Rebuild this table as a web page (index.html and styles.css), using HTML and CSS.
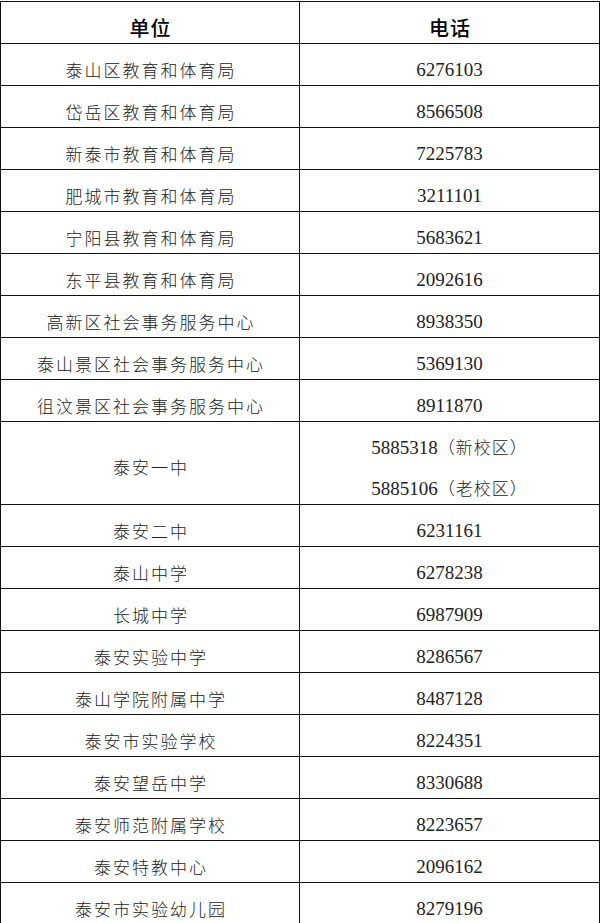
FILE: index.html
```html
<!DOCTYPE html>
<html lang="zh-CN">
<head>
<meta charset="utf-8">
<title>单位电话</title>
<link rel="stylesheet" href="styles.css">
</head>
<body>
<div class="sheet">
  <div class="cell head">单位</div>
  <div class="cell head">电话</div>

  <div class="cell name">泰山区教育和体育局</div>
  <div class="cell tel">6276103</div>
  <div class="cell name">岱岳区教育和体育局</div>
  <div class="cell tel">8566508</div>
  <div class="cell name">新泰市教育和体育局</div>
  <div class="cell tel">7225783</div>
  <div class="cell name">肥城市教育和体育局</div>
  <div class="cell tel">3211101</div>
  <div class="cell name">宁阳县教育和体育局</div>
  <div class="cell tel">5683621</div>
  <div class="cell name">东平县教育和体育局</div>
  <div class="cell tel">2092616</div>
  <div class="cell name">高新区社会事务服务中心</div>
  <div class="cell tel">8938350</div>
  <div class="cell name">泰山景区社会事务服务中心</div>
  <div class="cell tel">5369130</div>
  <div class="cell name">徂汶景区社会事务服务中心</div>
  <div class="cell tel">8911870</div>

  <div class="cell name tall">泰安一中</div>
  <div class="cell tel tall multi">
    <div class="line">5885318<span class="cjk">（新校区）</span></div>
    <div class="line">5885106<span class="cjk">（老校区）</span></div>
  </div>

  <div class="cell name">泰安二中</div>
  <div class="cell tel">6231161</div>
  <div class="cell name">泰山中学</div>
  <div class="cell tel">6278238</div>
  <div class="cell name">长城中学</div>
  <div class="cell tel">6987909</div>
  <div class="cell name">泰安实验中学</div>
  <div class="cell tel">8286567</div>
  <div class="cell name">泰山学院附属中学</div>
  <div class="cell tel">8487128</div>
  <div class="cell name">泰安市实验学校</div>
  <div class="cell tel">8224351</div>
  <div class="cell name">泰安望岳中学</div>
  <div class="cell tel">8330688</div>
  <div class="cell name">泰安师范附属学校</div>
  <div class="cell tel">8223657</div>
  <div class="cell name">泰安特教中心</div>
  <div class="cell tel">2096162</div>
  <div class="cell name">泰安市实验幼儿园</div>
  <div class="cell tel">8279196</div>
</div>
</body>
</html>
```

FILE: styles.css
```css
html, body {
  margin: 0;
  padding: 0;
  background: #ffffff;
}

body {
  width: 600px;
  height: 923px;
  overflow: hidden;
}

.sheet {
  margin-top: 1px;
  width: 600px;
  box-sizing: border-box;
  padding: 1px;
  background: #111111;
  display: grid;
  grid-template-columns: 298px 299px;
  gap: 1px;
}

.cell {
  background: #ffffff;
  height: 41px;
  box-sizing: border-box;
  padding-top: 5px;
  line-height: 41px;
  text-align: center;
  overflow: hidden;
  white-space: nowrap;
  color: #1a1a1a;
}

.head {
  font-family: "Noto Sans CJK SC", sans-serif;
  font-size: 20px;
  font-weight: 500;
  color: #000000;
  letter-spacing: 1px;
  padding-left: 1px;
}

.name {
  font-family: "Noto Sans CJK SC", sans-serif;
  font-size: 17px;
  font-weight: 300;
  letter-spacing: 2px;
  padding-left: 2px;
  color: #222222;
}

.tel {
  font-family: "Liberation Serif", "Noto Sans CJK SC", serif;
  font-size: 19px;
  color: #222222;
}

.tall {
  height: 82px;
  line-height: 82px;
  padding-top: 4px;
}

.multi {
  line-height: 41px;
  padding-top: 4px;
}

.line {
  height: 41px;
}

.cjk {
  font-family: "Noto Sans CJK SC", sans-serif;
  font-size: 17px;
  font-weight: 300;
  letter-spacing: 1px;
}
```
